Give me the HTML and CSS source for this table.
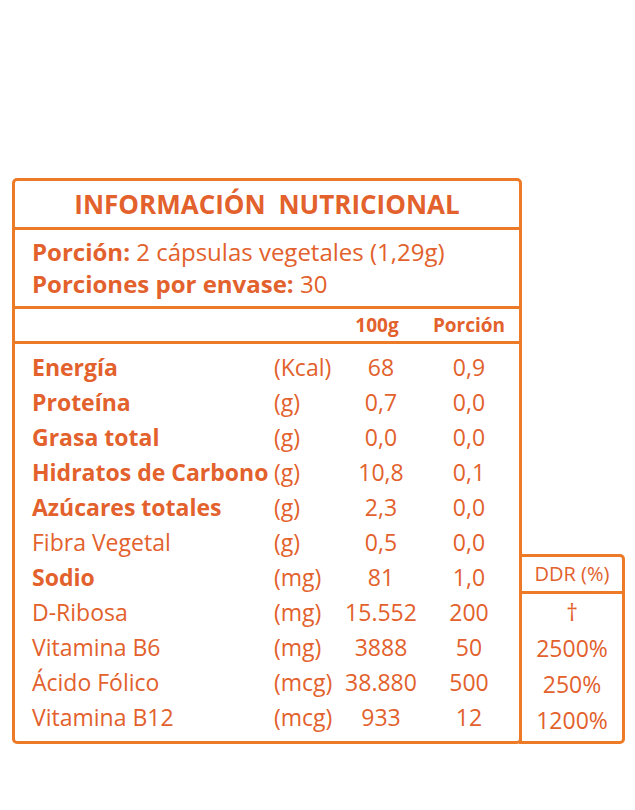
FILE: index.html
```html
<!DOCTYPE html>
<html lang="es">
<head>
<meta charset="utf-8">
<title>Información Nutricional</title>
<link rel="stylesheet" href="styles.css">
</head>
<body>
<div class="page">
  <div class="label">
    <section class="main">
      <h1 class="title">INFORMACIÓN NUTRICIONAL</h1>
      <div class="serving">
        <p><b>Porción:</b> 2 cápsulas vegetales (1,29g)</p>
        <p><b>Porciones por envase:</b> 30</p>
      </div>
      <div class="row head">
        <span></span><span></span><span class="num col-100">100g</span><span class="num">Porción</span>
      </div>
      <div class="body">
        <div class="row"><b>Energía</b><span>(Kcal)</span><span class="num">68</span><span class="num">0,9</span></div>
        <div class="row"><b>Proteína</b><span>(g)</span><span class="num">0,7</span><span class="num">0,0</span></div>
        <div class="row"><b>Grasa total</b><span>(g)</span><span class="num">0,0</span><span class="num">0,0</span></div>
        <div class="row"><b>Hidratos de Carbono</b><span>(g)</span><span class="num">10,8</span><span class="num">0,1</span></div>
        <div class="row"><b>Azúcares totales</b><span>(g)</span><span class="num">2,3</span><span class="num">0,0</span></div>
        <div class="row"><span>Fibra Vegetal</span><span>(g)</span><span class="num">0,5</span><span class="num">0,0</span></div>
        <div class="row"><b>Sodio</b><span>(mg)</span><span class="num">81</span><span class="num">1,0</span></div>
        <div class="row"><span>D-Ribosa</span><span>(mg)</span><span class="num">15.552</span><span class="num">200</span></div>
        <div class="row"><span>Vitamina B6</span><span>(mg)</span><span class="num">3888</span><span class="num">50</span></div>
        <div class="row"><span>Ácido Fólico</span><span>(mcg)</span><span class="num">38.880</span><span class="num">500</span></div>
        <div class="row"><span>Vitamina B12</span><span>(mcg)</span><span class="num">933</span><span class="num">12</span></div>
      </div>
    </section>
    <section class="ddr">
      <div class="ddr-head">DDR (%)</div>
      <div class="ddr-body">
        <div class="ddr-row">†</div>
        <div class="ddr-row">2500%</div>
        <div class="ddr-row">250%</div>
        <div class="ddr-row">1200%</div>
      </div>
    </section>
  </div>
</div>
</body>
</html>
```

FILE: styles.css
```css
* { box-sizing: border-box; }
html, body { margin: 0; padding: 0; background: #ffffff; }
body {
  font-family: "Open Sans", "Noto Sans", sans-serif;
  color: #e2612c;
}
.page { padding: 178px 0 0 12px; }
.label { display: flex; align-items: flex-end; }
.main {
  width: 510px;
  height: 566px;
  border: 3px solid #ec7a27;
  border-radius: 5px;
  display: flex;
  flex-direction: column;
}
.title {
  margin: 0;
  height: 49px;
  border-bottom: 3px solid #ec7a27;
  font-size: 26px;
  font-weight: 700;
  line-height: 47px;
  text-align: center;
  word-spacing: 6px;
}
.serving {
  height: 79px;
  border-bottom: 3px solid #ec7a27;
  padding: 6px 0 0 17px;
  font-size: 24px;
}
.serving p { margin: 0; line-height: 32px; }
.serving b { font-weight: 700; }
.row {
  display: grid;
  grid-template-columns: 242px 70px 74px 102px;
  height: 35px;
  line-height: 35px;
  font-size: 23px;
  padding-left: 17px;
  white-space: nowrap;
}
.row b { font-weight: 700; }
.row .num { text-align: center; }
.head {
  height: 35px;
  line-height: 33px;
  border-bottom: 3px solid #ec7a27;
  font-size: 19px;
  font-weight: 700;
}
.head .col-100 { padding-right: 8px; }
.body { padding-top: 6px; }
.ddr {
  width: 106px;
  height: 190px;
  margin-left: -3px;
  border: 3px solid #ec7a27;
  border-radius: 0 5px 5px 0;
  text-align: center;
}
.ddr-head {
  height: 37px;
  line-height: 34px;
  border-bottom: 3px solid #ec7a27;
  font-size: 20px;
}
.ddr-row {
  height: 36px;
  line-height: 36px;
  font-size: 23px;
}
```
